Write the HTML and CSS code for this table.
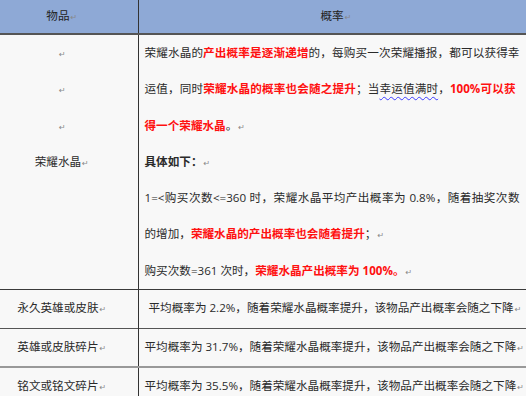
FILE: index.html
```html
<!DOCTYPE html>
<html lang="zh">
<head>
<meta charset="utf-8">
<link rel="stylesheet" href="styles.css">
</head>
<body>
<table class="tbl">
  <thead>
    <tr class="head">
      <th class="c1">物品<span class="ret">↵</span></th>
      <th class="c2 h2">概率<span class="ret">↵</span></th>
    </tr>
  </thead>
  <tbody>
    <tr class="big">
      <td class="c1 lines">
        <div class="ln"><span class="ret">↵</span></div>
        <div class="ln"><span class="ret">↵</span></div>
        <div class="ln"><span class="ret">↵</span></div>
        <div class="ln">荣耀水晶<span class="ret">↵</span></div>
        <div class="ln"></div>
        <div class="ln"></div>
        <div class="ln"></div>
      </td>
      <td class="c2 lines">
        <div class="ln j">荣耀水晶的<b class="red">产出概率是逐渐递增</b>的，每购买一次荣耀播报，都可以获得幸</div>
        <div class="ln j j2">运值，同时<b class="red">荣耀水晶的概率也会随之提升</b>；当<span class="wavy">幸运值满时</span>，<b class="red">100%可以获</b></div>
        <div class="ln"><b class="red">得一个荣耀水晶</b>。<span class="ret">↵</span></div>
        <div class="ln"><b>具体如下：</b><span class="ret">↵</span></div>
        <div class="ln j">1=&lt;购买次数&lt;=360 时，荣耀水晶平均产出概率为 0.8%，随着抽奖次数</div>
        <div class="ln">的增加，<b class="red">荣耀水晶的产出概率也会随着提升</b>；<span class="ret">↵</span></div>
        <div class="ln">购买次数=361 次时，<b class="red">荣耀水晶产出概率为 100%。</b><span class="ret">↵</span></div>
      </td>
    </tr>
    <tr class="row r1">
      <td class="c1">永久英雄或皮肤<span class="ret">↵</span></td>
      <td class="c2 ind">平均概率为 2.2%，随着荣耀水晶概率提升，该物品产出概率会随之下降<span class="ret">↵</span></td>
    </tr>
    <tr class="row r2">
      <td class="c1">英雄或皮肤碎片<span class="ret">↵</span></td>
      <td class="c2">平均概率为 31.7%，随着荣耀水晶概率提升，该物品产出概率会随之下降<span class="ret">↵</span></td>
    </tr>
    <tr class="row r3">
      <td class="c1">铭文或铭文碎片<span class="ret">↵</span></td>
      <td class="c2">平均概率为 35.5%，随着荣耀水晶概率提升，该物品产出概率会随之下降<span class="ret">↵</span></td>
    </tr>
  </tbody>
</table>
</body>
</html>
```

FILE: styles.css
```css
html, body {
  margin: 0;
  padding: 0;
  background: #f8f8f8;
  overflow: hidden;
}
body {
  width: 526px;
  height: 396px;
  font-family: "Open Sans", "Noto Sans CJK SC", sans-serif;
  font-size: 11.6px;
  color: #2a2a2a;
}
.tbl {
  border-collapse: collapse;
  table-layout: fixed;
  width: 540px;
}
.tbl td, .tbl th {
  padding: 0;
  white-space: nowrap;
  overflow: hidden;
  vertical-align: top;
}
.c1 {
  width: 138px;
  text-align: center;
  padding-right: 14px !important;
  border-right: 1px solid #333;
  box-sizing: border-box;
}
.c2 {
  text-align: left;
  padding-left: 6px !important;
}
.head th {
  height: 31px;
  background: #8ea9d6;
  font-weight: normal;
  color: #222;
  line-height: 31px;
  border-bottom: 2px solid #555;
  vertical-align: middle;
}
.head .h2 {
  text-align: left;
  padding-left: 182px !important;
}
.ln {
  height: 36.3px;
  line-height: 36.3px;
}
.j {
  width: 375px;
  white-space: normal;
  text-align: justify;
  text-align-last: justify;
}
.j2 {
  width: 371px;
}
.big td {
  border-bottom: 1px solid #3a3a3a;
}
.row td {
  height: 35.5px;
  line-height: 35.5px;
  vertical-align: middle;
}
.r2 td {
  border-top: 1px solid #555;
}
.r3 td {
  border-top: 2px solid #999;
}
.ind {
  padding-left: 10px !important;
}
.red {
  color: #ff1010;
  font-weight: bold;
}
b {
  font-weight: bold;
}
.ret {
  font-family: "DejaVu Sans", sans-serif;
  font-size: 8px;
  color: #888;
  margin-left: 1px;
}
.wavy {
  text-decoration: underline wavy #3a3aff;
  text-decoration-thickness: 1px;
  text-underline-offset: 3px;
}
```
